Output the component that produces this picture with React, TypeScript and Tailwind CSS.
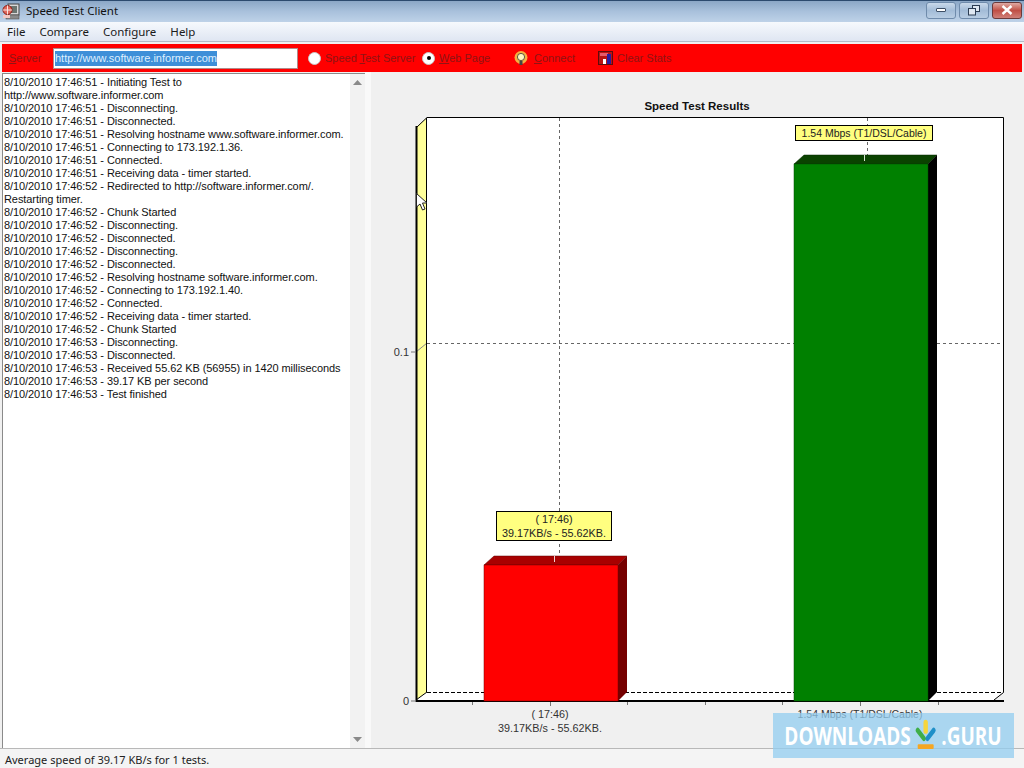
import React from "react";

const LOG = [
  "8/10/2010 17:46:51 - Initiating Test to",
  "http://www.software.informer.com",
  "8/10/2010 17:46:51 - Disconnecting.",
  "8/10/2010 17:46:51 - Disconnected.",
  "8/10/2010 17:46:51 - Resolving hostname www.software.informer.com.",
  "8/10/2010 17:46:51 - Connecting to 173.192.1.36.",
  "8/10/2010 17:46:51 - Connected.",
  "8/10/2010 17:46:51 - Receiving data - timer started.",
  "8/10/2010 17:46:52 - Redirected to http://software.informer.com/.",
  "Restarting timer.",
  "8/10/2010 17:46:52 - Chunk Started",
  "8/10/2010 17:46:52 - Disconnecting.",
  "8/10/2010 17:46:52 - Disconnected.",
  "8/10/2010 17:46:52 - Disconnecting.",
  "8/10/2010 17:46:52 - Disconnected.",
  "8/10/2010 17:46:52 - Resolving hostname software.informer.com.",
  "8/10/2010 17:46:52 - Connecting to 173.192.1.40.",
  "8/10/2010 17:46:52 - Connected.",
  "8/10/2010 17:46:52 - Receiving data - timer started.",
  "8/10/2010 17:46:52 - Chunk Started",
  "8/10/2010 17:46:53 - Disconnecting.",
  "8/10/2010 17:46:53 - Disconnected.",
  "8/10/2010 17:46:53 - Received 55.62 KB (56955) in 1420 milliseconds",
  "8/10/2010 17:46:53 - 39.17 KB per second",
  "8/10/2010 17:46:53 - Test finished",
];

function WinButton({ w, children, red }: { w: string; children: React.ReactNode; red?: boolean }) {
  return (
    <div
      className={`${w} h-[17px] rounded-[3px] border flex items-center justify-center ${
        red
          ? "border-[#6b3a3a] bg-gradient-to-b from-[#dfa9a3] via-[#c04f45] to-[#cf7f78]"
          : "border-[#6f8bab] bg-gradient-to-b from-[#c9d9ea] via-[#a3bcd7] to-[#b8cde3]"
      }`}
    >
      {children}
    </div>
  );
}

function Radio({ on }: { on?: boolean }) {
  return (
    <span className="w-[13px] h-[13px] shrink-0 rounded-full bg-white border border-[#c8c8c8] flex items-center justify-center">
      {on && <span className="w-[4px] h-[4px] rounded-full bg-black" />}
    </span>
  );
}

function Chart() {
  const f = "'Liberation Sans', Arial, sans-serif";
  return (
    <svg width="653" height="676" viewBox="371 72 653 676" className="block">
      <text x="697" y="110" textAnchor="middle" fontFamily={f} fontSize="11.5" fontWeight="700" fill="#111">Speed Test Results</text>
      {/* wall */}
      <polygon points="416,127 427,118 427,692 416,700" fill="#ffff99" />
      <rect x="427" y="118" width="576" height="574" fill="#fff" />
      <polygon points="416,700 427,692 1003,692 994,700" fill="#fff" />
      {/* grid */}
      <g stroke="#666" strokeWidth="1" strokeDasharray="3 3" fill="none">
        <line x1="559.5" y1="118" x2="559.5" y2="556" />
        <line x1="867.5" y1="118" x2="867.5" y2="156" />
        <line x1="427" y1="343.5" x2="1003" y2="343.5" />
      </g>
      <line x1="427" y1="692.5" x2="1003" y2="692.5" stroke="#000" strokeDasharray="4 2" />
      <line x1="416" y1="352" x2="427" y2="343" stroke="#888" />
      {/* frame */}
      <path d="M427 117.5H1003.5V692.5L994 700" fill="none" stroke="#000" strokeWidth="1" />
      <line x1="426.5" y1="118" x2="426.5" y2="692" stroke="#000" />
      <line x1="417" y1="127" x2="427" y2="117.5" stroke="#000" />
      <line x1="416" y1="700" x2="427" y2="692" stroke="#000" />
      <line x1="416.5" y1="126" x2="416.5" y2="702" stroke="#000" strokeWidth="2" />
      <line x1="416" y1="701" x2="1004" y2="701" stroke="#000" strokeWidth="2" />
      {/* ticks */}
      <g stroke="#777">
        <line x1="411" y1="701" x2="416" y2="701" />
        <line x1="411" y1="352" x2="416" y2="352" />
        <line x1="550.5" y1="702" x2="550.5" y2="706" />
        <line x1="705.5" y1="702" x2="705.5" y2="705" />
        <line x1="472.5" y1="702" x2="472.5" y2="705" />
        <line x1="627.5" y1="702" x2="627.5" y2="705" />
        <line x1="860.5" y1="702" x2="860.5" y2="706" />
        <line x1="938.5" y1="702" x2="938.5" y2="705" />
        <line x1="782.5" y1="702" x2="782.5" y2="705" />
      </g>
      {/* red bar */}
      <polygon points="484,565 494,556 627,556 618,565" fill="#a80000" stroke="#5c0000" strokeWidth="0.5" />
      <polygon points="618,565 627,556 627,692 618,701" fill="#750000" />
      <rect x="484" y="565" width="134" height="136" fill="#ff0000" stroke="#7a0000" strokeWidth="0.5" />
      <line x1="554.5" y1="556" x2="554.5" y2="562" stroke="#f4d0d0" />
      {/* green bar */}
      <polygon points="794,164 804,155 937,155 928,164" fill="#0a4200" stroke="#062b00" strokeWidth="0.5" />
      <polygon points="928,164 937,155 937,692 928,701" fill="#000" />
      <rect x="794" y="164" width="134" height="537" fill="#008000" stroke="#004d00" strokeWidth="0.5" />
      <line x1="864.5" y1="155" x2="864.5" y2="161" stroke="#d5e5d0" />
      {/* tips */}
      <rect x="496.5" y="511.5" width="115" height="29" fill="#ffff80" stroke="#000" />
      <text x="554" y="523" textAnchor="middle" fontFamily={f} fontSize="10.8" fill="#222">( 17:46)</text>
      <text x="554" y="537" textAnchor="middle" fontFamily={f} fontSize="10.8" fill="#222">39.17KB/s - 55.62KB.</text>
      <rect x="795.5" y="125.5" width="137" height="15" fill="#ffff80" stroke="#000" />
      <text x="864" y="137" textAnchor="middle" fontFamily={f} fontSize="10.5" fill="#222">1.54 Mbps (T1/DSL/Cable)</text>
      {/* axis labels */}
      <text x="409" y="356" textAnchor="end" fontFamily={f} fontSize="11" fill="#333">0.1</text>
      <text x="409" y="705" textAnchor="end" fontFamily={f} fontSize="11" fill="#333">0</text>
      <text x="550" y="718" textAnchor="middle" fontFamily={f} fontSize="10.8" fill="#333">( 17:46)</text>
      <text x="550" y="732" textAnchor="middle" fontFamily={f} fontSize="10.8" fill="#333">39.17KB/s - 55.62KB.</text>
      <text x="860" y="718" textAnchor="middle" fontFamily={f} fontSize="10.5" fill="#333">1.54 Mbps (T1/DSL/Cable)</text>
    </svg>
  );
}

export default function App() {
  return (
    <div className="relative w-[1024px] h-[768px] overflow-hidden flex flex-col bg-[#f0f0f0] font-['Liberation_Sans',Arial,sans-serif]">
      {/* Title bar */}
      <div className="h-[22px] shrink-0 flex items-center justify-between pl-[2px] pr-[2px] border-t border-[#2c4a6e] bg-gradient-to-b from-[#8ba7c6] via-[#a9c1dc] to-[#bed2e8]">
        <div className="flex items-center gap-[6px] -mt-[1px]">
          <svg width="18" height="18" viewBox="0 0 18 18">
            <rect x="6" y="2" width="11" height="11" fill="#d8d8d8" stroke="#444" />
            <rect x="8" y="4" width="7" height="7" fill="#6a7570" />
            <rect x="4" y="13" width="13" height="4" fill="#8a8a8a" stroke="#444" strokeWidth="0.5" />
            <circle cx="5.5" cy="8" r="4.5" fill="#e0685c" stroke="#8b1a12" />
            <path d="M1 8h9M5.5 3.5v9" stroke="#fbe3e0" strokeWidth="1" />
            <rect x="1" y="13" width="7" height="3" fill="#f3c9c4" />
          </svg>
          <span className="font-['Noto_Sans',sans-serif] text-[11.5px] text-[#111]">Speed Test Client</span>
        </div>
        <div className="flex gap-[3px] -mt-[3px]">
          <WinButton w="w-[30px]"><span className="w-[10px] h-[4px] bg-white border border-[#3d4f66] rounded-[1px]" /></WinButton>
          <WinButton w="w-[30px]">
            <svg width="12" height="11" viewBox="0 0 12 11" fill="none" stroke="#2b3c52">
              <rect x="4.5" y="0.5" width="7" height="6" fill="#dfe8f2" />
              <rect x="0.5" y="3.5" width="7" height="6.5" fill="#dfe8f2" />
            </svg>
          </WinButton>
          <WinButton w="w-[30px]" red>
            <svg width="12" height="10" viewBox="0 0 12 10" stroke="#fff" strokeWidth="2.4"><path d="M1.5 1l9 8M10.5 1l-9 8" /></svg>
          </WinButton>
        </div>
      </div>

      {/* Menu */}
      <div className="h-[20px] shrink-0 flex items-center pl-[7px] gap-[14px] bg-gradient-to-b from-[#f6f9fd] to-[#dfe6f2] border-b border-[#b4bcc8] font-['Noto_Sans',sans-serif] text-[11.5px] text-[#1a1a1a]">
        <span>File</span>
        <span>Compare</span>
        <span>Configure</span>
        <span>Help</span>
      </div>

      {/* Toolbar */}
      <div className="h-[28px] shrink-0 mt-[2px] mx-[2px] bg-[#ff0000] flex items-center text-[11px] text-[#8f1414] whitespace-nowrap">
        <span className="ml-[7px] w-[44px]"><u>S</u>erver</span>
        <div className="w-[245px] h-[21px] bg-white border border-[#b08a8a] flex items-center pl-[1px]">
          <span className="bg-[#3e8fd8] text-[#dff0ff] leading-[15px]">http://www.software.informer.com</span>
        </div>
        <span className="ml-[10px]"><Radio /></span>
        <span className="ml-[4px] w-[97px]">Speed <u>T</u>est Server</span>
        <Radio on />
        <span className="ml-[4px] w-[75px]"><u>W</u>eb Page</span>
        <svg width="14" height="15" viewBox="0 0 14 15">
          <circle cx="7" cy="6.5" r="6.5" fill="#f5b041" />
          <circle cx="7" cy="6" r="3.6" fill="#fff6c0" stroke="#333" strokeWidth="0.8" />
          <rect x="5.5" y="10" width="3" height="4" fill="#444" />
        </svg>
        <span className="ml-[6px] w-[64px]"><u>C</u>onnect</span>
        <svg width="15" height="15" viewBox="0 0 15 15">
          <rect x="0.5" y="0.5" width="14" height="13" fill="#b81414" stroke="#5c0d0d" />
          <rect x="2" y="2" width="8" height="3" fill="#e85a6a" />
          <rect x="5" y="8" width="3" height="5" fill="#fff" />
          <rect x="9" y="3" width="4" height="10" fill="#2a1ca0" />
        </svg>
        <span className="ml-[4px]">Clear Stats</span>
      </div>

      {/* Main */}
      <div className="flex-1 min-h-0 flex">
        <div className="ml-[2px] w-[363px] mt-[1px] mb-[3px] flex bg-white border-l border-t border-[#8a8a8a]">
          <div className="w-[347px] pt-[2px] pl-[1px] text-[11px] leading-[13px] tracking-[-0.08px] text-[#111] whitespace-nowrap">
            {LOG.map((l, i) => (
              <div key={i}>{l}</div>
            ))}
          </div>
          <div className="w-[15px] bg-[#f2f2f2] flex flex-col items-center justify-between py-[6px]">
            <svg width="9" height="5" viewBox="0 0 9 5"><path d="M4.5 0L9 5H0z" fill="#8a8a8a" /></svg>
            <svg width="9" height="5" viewBox="0 0 9 5"><path d="M4.5 5L9 0H0z" fill="#8a8a8a" /></svg>
          </div>
        </div>
        <div className="w-[6px] mb-[3px] bg-[#f9f9f9]" />
        <Chart />
      </div>

      {/* Status */}
      <div className="h-[20px] shrink-0 -mt-[3px] flex flex-col">
        <div className="h-[2px] bg-[#a8a8a8]" />
        <div className="h-[1px] bg-[#f4f4f4]" />
        <div className="flex-1 flex items-center pl-[5px] pt-[3px] border-t border-[#b8b8b8] border-b-2 border-b-[#555] bg-[#f4f4f4] font-['Noto_Sans',sans-serif] text-[11px] text-[#222]">
          Average speed of 39.17 KB/s for 1 tests.
        </div>
      </div>

      {/* Cursor */}
      <svg className="absolute left-[416px] top-[193px]" width="12" height="20" viewBox="0 0 12 20">
        <path d="M0.5 0.5V14L4 11l2.5 6 2.5-1-2.5-6H11z" fill="#fff" stroke="#222" />
      </svg>

      {/* Watermark */}
      <div className="absolute left-[773px] top-[713px] w-[241px] h-[45px] bg-[#93cdf0]/75 flex items-center justify-center text-white font-['Open_Sans',sans-serif] font-bold text-[25px] leading-none">
        <span className="scale-x-[0.76] -translate-x-[1px] flex items-center whitespace-nowrap">
          DOWNLOADS
          <svg className="mx-[6px] -mt-[2px]" width="28" height="32" viewBox="0 0 24 26">
            <rect x="9.5" y="0" width="5" height="12" rx="2.5" fill="#f6d53b" />
            <path d="M3 9l7 7" stroke="#3fae49" strokeWidth="4.5" strokeLinecap="round" />
            <path d="M21 9l-7 7" stroke="#1f8fc8" strokeWidth="4.5" strokeLinecap="round" />
            <rect x="3" y="21" width="18" height="4" rx="1" fill="#f5a623" />
          </svg>
          .GURU
        </span>
      </div>
    </div>
  );
}
